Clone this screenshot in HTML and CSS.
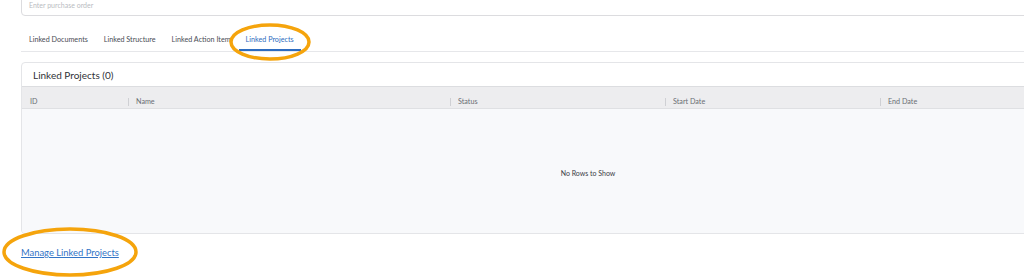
FILE: index.html
```html
<!DOCTYPE html>
<html>
<head>
<meta charset="utf-8">
<link rel="stylesheet" href="styles.css">
</head>
<body>
<div class="page">
  <div class="input">Enter purchase order</div>
  <div class="tabs">
    <div class="tab">Linked Documents</div>
    <div class="tab">Linked Structure</div>
    <div class="tab">Linked Action Item</div>
    <div class="tab active">Linked Projects</div>
  </div>
  <div class="card">
    <div class="card-title">Linked Projects (0)</div>
    <div class="grid-head">
      <div class="col c1">ID</div>
      <div class="col c2">Name</div>
      <div class="col c3">Status</div>
      <div class="col c4">Start Date</div>
      <div class="col c5">End Date</div>
    </div>
    <div class="grid-body">No Rows to Show</div>
  </div>
  <a class="manage" href="#">Manage Linked Projects</a>
  <svg class="ring ring-tab" width="84" height="40" viewBox="0 0 84 40"><ellipse cx="42" cy="20" rx="39" ry="17" fill="none" stroke="#f5a40c" stroke-width="3.5"/></svg>
  <svg class="ring ring-link" width="140" height="52" viewBox="0 0 140 52"><ellipse cx="70" cy="26" rx="66" ry="23" fill="none" stroke="#f5a40c" stroke-width="3.5"/></svg>
</div>
</body>
</html>
```
FILE: styles.css
```css
html, body {
  margin: 0;
  padding: 0;
  background: #fff;
  overflow: hidden;
}
.page {
  position: relative;
  display: flow-root;
  width: 1200px;
  height: 277px;
  padding-left: 21px;
  box-sizing: border-box;
  font-family: Lato, "Open Sans", sans-serif;
}
.input {
  margin-top: -10px;
  width: 1150px;
  height: 26px;
  border: 1px solid #dcdcdf;
  border-radius: 4px;
  box-sizing: border-box;
  padding: 10px 0 0 7px;
  font-size: 7px;
  color: #b9bcc2;
}
.tabs {
  display: flex;
  margin-top: 15px;
  width: 1150px;
  border-bottom: 1px solid #e6e7ea;
  height: 21px;
  box-sizing: border-box;
}
.tab {
  padding: 0 8px;
  font-size: 7.2px;
  color: #4a4d55;
  line-height: 18px;
  height: 20px;
  box-sizing: border-box;
}
.tab.active {
  color: #2d6cc0;
  border-bottom: 2px solid #2d6cc0;
  padding: 0 7px;
}
.card {
  margin-top: 10px;
  width: 1134px;
  border: 1px solid #e4e5e8;
  border-radius: 4px;
  overflow: hidden;
  box-sizing: border-box;
}
.card-title {
  height: 23px;
  padding-left: 11px;
  line-height: 24px;
  font-size: 10px;
  color: #2f3237;
  border-bottom: 1px solid #dcdde0;
}
.grid-head {
  display: flex;
  height: 22px;
  background: #ededef;
  border-bottom: 1px solid #dfe0e3;
  align-items: center;
  padding-top: 8px;
  box-sizing: border-box;
}
.col {
  font-size: 7.2px;
  color: #6a6d74;
  padding-left: 8px;
  box-sizing: border-box;
  position: relative;
}
.col + .col::before {
  content: "";
  position: absolute;
  left: 0;
  top: 1px;
  height: 8px;
  border-left: 1px solid #cfd0d4;
}
.c1 { width: 106px; }
.c2 { width: 322px; }
.c3 { width: 215px; }
.c4 { width: 215px; }
.c5 { flex: 1; }
.grid-body {
  height: 124px;
  padding-top: 3px;
  box-sizing: border-box;
  background: #f8f9fb;
  display: flex;
  align-items: center;
  justify-content: center;
  font-size: 7px;
  color: #3a3d44;
}
.manage {
  display: inline-block;
  margin-top: 13px;
  font-size: 9.4px;
  color: #3274c6;
  text-decoration: underline;
}
.ring {
  position: absolute;
}
.ring-tab {
  left: 228px;
  top: 22px;
}
.ring-link {
  left: 0px;
  top: 226px;
}
```
